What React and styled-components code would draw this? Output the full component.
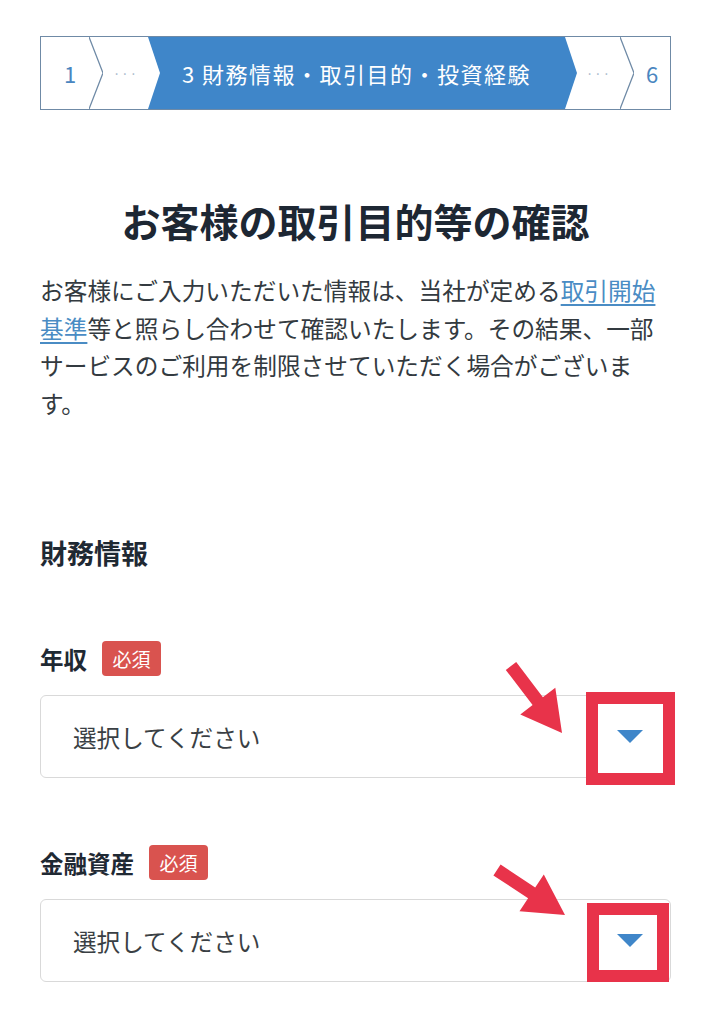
import React from "react";
import styled, { createGlobalStyle } from "styled-components";

const GlobalStyle = createGlobalStyle`
  html, body {
    margin: 0;
    padding: 0;
    background: #fff;
    font-family: "Noto Sans CJK JP", "Noto Sans", sans-serif;
  }
`;

const Page = styled.div`
  width: 712px;
  padding: 36px 41px 40px 40px;
  box-sizing: border-box;
`;

// stepper
const Stepper = styled.div`
  display: flex;
  height: 72px;
  border: 1px solid #6f8aa6;
  background: #fff;
`;

const StepNum = styled.div`
  width: ${(p) => p.$w}px;
  padding-left: ${(p) => p.$pl || 0}px;
  box-sizing: border-box;
  display: flex;
  align-items: center;
  justify-content: center;
  font-size: 22px;
  color: #4a86c0;
`;

const StepDots = styled.div`
  width: ${(p) => p.$w}px;
  display: flex;
  align-items: center;
  justify-content: center;
  font-size: 13px;
  letter-spacing: 1px;
  color: #9fb4c8;
`;

const StepActive = styled.div`
  width: 429px;
  display: flex;
  align-items: center;
  justify-content: center;
  padding-right: 12px;
  box-sizing: border-box;
  background: #3f86c9;
  color: #fff;
  font-size: 22px;
  letter-spacing: 1.5px;
  clip-path: polygon(0 0, calc(100% - 12px) 0, 100% 50%, calc(100% - 12px) 100%, 0 100%, 12px 50%);
`;

const Chevron = () => (
  <svg width="14" height="72" viewBox="0 0 14 72">
    <polyline points="0,0 14,36 0,72" fill="none" stroke="#6f8aa6" strokeWidth="1.3" />
  </svg>
);

const Title = styled.h1`
  margin: 84px 0 0;
  font-size: 39px;
  line-height: 53px;
  font-weight: 700;
  text-align: center;
  color: #1d2733;
`;

const Lead = styled.p`
  margin: 25px 0 0;
  font-size: 23.7px;
  line-height: 37.5px;
  color: #333a40;

  a {
    color: #4a8cc4;
    text-decoration: underline;
    text-underline-offset: 4px;
  }
`;

const SectionTitle = styled.h2`
  margin: 112px 0 0;
  font-size: 27px;
  line-height: 37px;
  font-weight: 700;
  color: #1f2933;
`;

const Field = styled.div`
  margin-top: ${(p) => p.$mt}px;
`;

const LabelRow = styled.div`
  display: flex;
  align-items: center;
  gap: 15px;
  height: 35px;
`;

const Label = styled.span`
  font-size: 23.5px;
  font-weight: 700;
  color: #1f2933;
`;

const Badge = styled.span`
  display: inline-flex;
  align-items: center;
  justify-content: center;
  width: 59px;
  height: 35px;
  border-radius: 4px;
  background: #d9534f;
  color: #fff;
  font-size: 19px;
`;

const SelectBox = styled.div`
  position: relative;
  margin-top: 19px;
  height: 83px;
  border: 1px solid #d9d9d9;
  border-radius: 6px;
  display: flex;
  align-items: center;
  justify-content: space-between;
  padding: 0 27px 0 32px;
  box-sizing: border-box;
  font-size: 23.6px;
  color: #3a3f44;
`;

const Caret = styled.span`
  width: 0;
  height: 0;
  border-left: 13px solid transparent;
  border-right: 13px solid transparent;
  border-top: 13px solid #3f86c9;
`;

const Highlight = styled.div`
  position: absolute;
  border: 12px solid #e8334a;
  box-sizing: border-box;
  pointer-events: none;
`;

const ArrowLayer = styled.svg`
  position: absolute;
  left: 0;
  top: 0;
  width: 100%;
  height: 100%;
  overflow: visible;
  pointer-events: none;
`;

const arrowPoints = (tail, tip) => {
  const dx = tip[0] - tail[0];
  const dy = tip[1] - tail[1];
  const len = Math.hypot(dx, dy);
  const ux = dx / len, uy = dy / len;
  const nx = -uy, ny = ux;
  const head = 40, hw = 22, sw = 6.5;
  const bx = tip[0] - ux * head, by = tip[1] - uy * head;
  const pts = [
    [tail[0] - nx * sw, tail[1] - ny * sw],
    [bx - nx * sw, by - ny * sw],
    [bx - nx * hw, by - ny * hw],
    tip,
    [bx + nx * hw, by + ny * hw],
    [bx + nx * sw, by + ny * sw],
    [tail[0] + nx * sw, tail[1] + ny * sw],
  ];
  return pts.map((p) => p.map((v) => v.toFixed(1)).join(",")).join(" ");
};

const Select = ({ box, tail, tip }) => (
  <SelectBox>
    選択してください
    <Caret />
    <Highlight style={{ left: box[0], top: box[1], width: box[2], height: box[3] }} />
    <ArrowLayer>
      <polygon points={arrowPoints(tail, tip)} fill="#e8334a" />
    </ArrowLayer>
  </SelectBox>
);

export default function App() {
  return (
    <>
      <GlobalStyle />
      <Page>
        <Stepper>
          <StepNum $w={48} $pl={10}>1</StepNum>
          <Chevron />
          <StepDots $w={45}>···</StepDots>
          <StepActive>3 財務情報・取引目的・投資経験</StepActive>
          <StepDots $w={43}>···</StepDots>
          <Chevron />
          <StepNum $w={36}>6</StepNum>
        </Stepper>

        <Title>お客様の取引目的等の確認</Title>
        <Lead>
          お客様にご入力いただいた情報は、当社が定める<a href="#">取引開始基準</a>等と照らし合わせて確認いたします。その結果、一部サービスのご利用を制限させていただく場合がございます。
        </Lead>

        <SectionTitle>財務情報</SectionTitle>

        <Field $mt={70}>
          <LabelRow>
            <Label>年収</Label>
            <Badge>必須</Badge>
          </LabelRow>
          <Select box={[545, -4, 89, 93]} tail={[470, -30]} tip={[521, 37]} />
        </Field>

        <Field $mt={67}>
          <LabelRow>
            <Label>金融資産</Label>
            <Badge>必須</Badge>
          </LabelRow>
          <Select box={[546, 3, 82, 79]} tail={[456, -30]} tip={[524, 15]} />
        </Field>
      </Page>
    </>
  );
}
